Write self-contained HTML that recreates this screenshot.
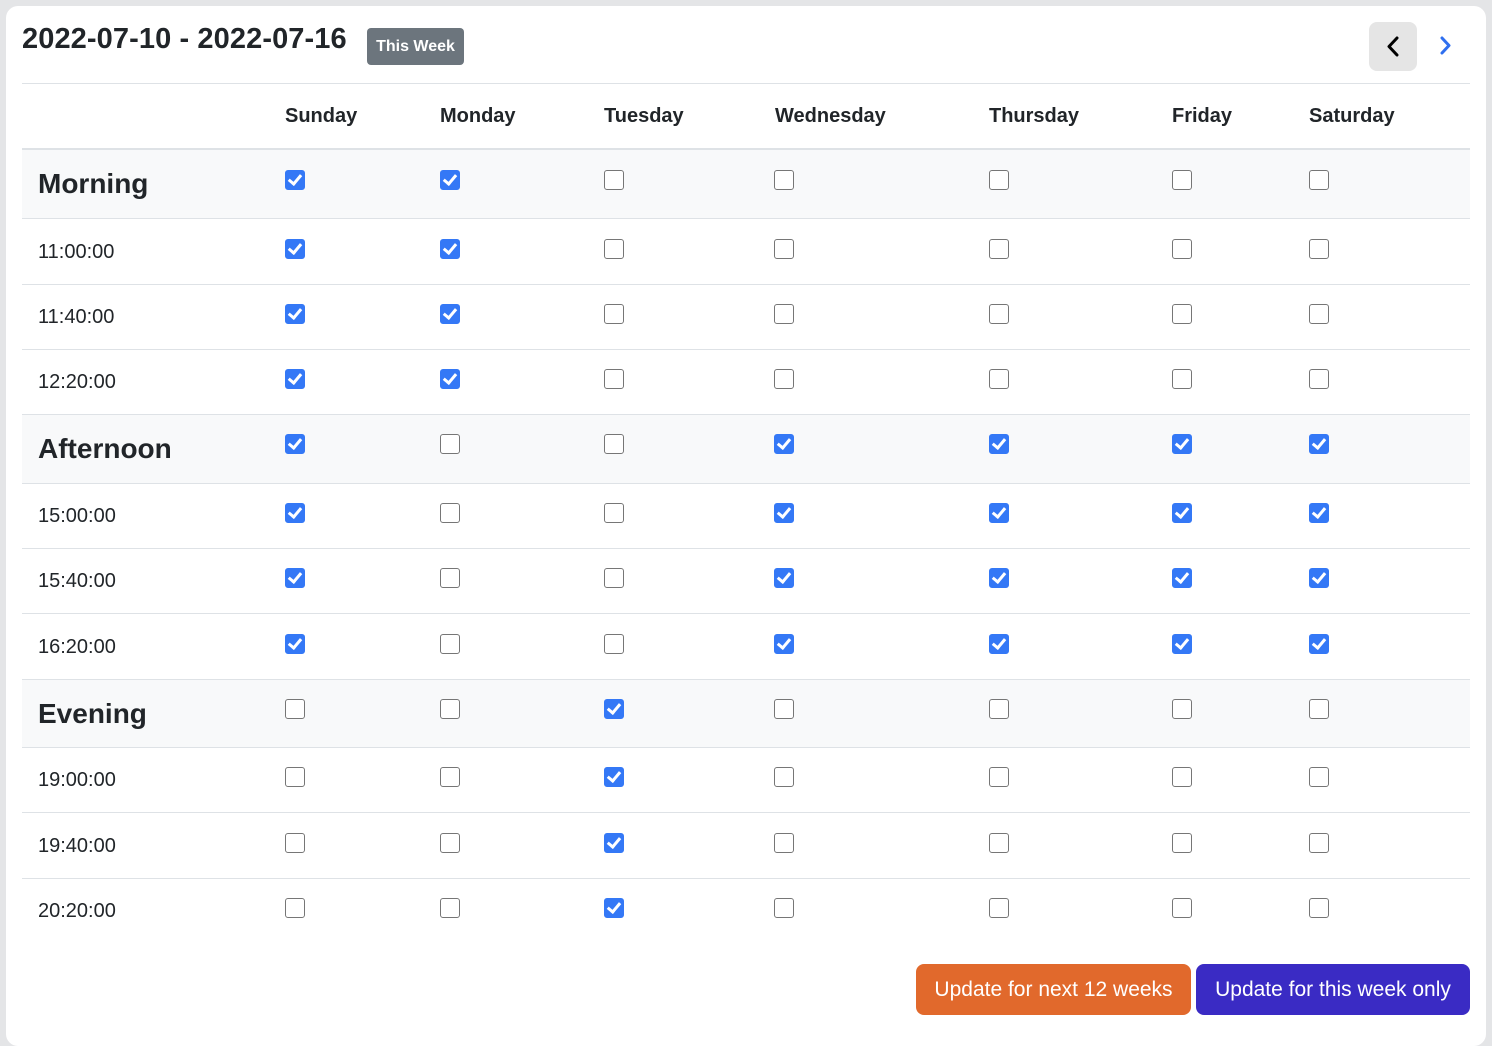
<!DOCTYPE html>
<html><head><meta charset="utf-8"><style>
*{box-sizing:border-box;margin:0;padding:0}
body{width:1492px;height:1028px;background:#e4e5e7;font-family:"Liberation Sans",sans-serif;color:#212529;overflow:hidden;position:relative}
.card{position:absolute;left:6px;top:6px;width:1480px;height:1040px;background:#fff;border-radius:12px}
.abs{position:absolute}
.title{left:22px;top:23px;font-size:29px;font-weight:bold;letter-spacing:0.1px}
.badge{left:367px;top:28px;width:97px;height:37px;background:#6c757d;border-radius:4px;color:#fff;font-weight:bold;font-size:16px;line-height:37px;text-align:center}
.prev{left:1369px;top:22px;width:48px;height:49px;background:#e5e5e5;border-radius:8px}
.hl{left:22px;width:1448px;height:1px;background:#dee2e6}
.th{top:105px;font-size:20px;font-weight:bold}
.row{position:absolute;left:22px;width:1448px;border-bottom:1px solid #dee2e6}
.g{background:#f8f9fa}
.lbl{position:absolute;left:16px;font-size:20px}
.g .lbl{font-size:28px;font-weight:bold}
.cb{position:absolute;width:20px;height:20px;border:1.5px solid #767676;border-radius:3px;background:#fff}
.cb.on{background:#3478f6;border-color:#3478f6}
.cb.on::after{content:"";position:absolute;left:5px;top:1px;width:5px;height:10px;border:solid #fff;border-width:0 3px 3px 0;transform:rotate(40deg)}
.btn{top:964px;height:51px;border-radius:8px;color:#fff;font-size:21px;line-height:51px;text-align:center}
</style></head><body>
<div class="card"></div>
<div class="abs title">2022-07-10 - 2022-07-16</div>
<div class="abs badge">This Week</div>
<div class="abs prev"><svg width="48" height="49"><path d="M28 16 L20 24.5 L28 33" stroke="#000" stroke-width="3" fill="none" stroke-linecap="round" stroke-linejoin="round"/></svg></div>
<svg class="abs" style="left:1436px;top:34px" width="20" height="24"><path d="M6 4 L13 11.5 L6 19" stroke="#2f6fef" stroke-width="3" fill="none" stroke-linecap="round" stroke-linejoin="round"/></svg>
<div class="abs hl" style="top:83px"></div>
<div class="abs th" style="left:285px">Sunday</div>
<div class="abs th" style="left:440px">Monday</div>
<div class="abs th" style="left:604px">Tuesday</div>
<div class="abs th" style="left:775px">Wednesday</div>
<div class="abs th" style="left:989px">Thursday</div>
<div class="abs th" style="left:1172px">Friday</div>
<div class="abs th" style="left:1309px">Saturday</div>
<div class="abs hl" style="top:148px;height:2px"></div>

<div class="row g" style="top:150px;height:69px"><div class="lbl" style="top:18px">Morning</div></div>
<div class="row" style="top:219px;height:66px"><div class="lbl" style="top:22px">11:00:00</div></div>
<div class="row" style="top:285px;height:65px"><div class="lbl" style="top:21px">11:40:00</div></div>
<div class="row" style="top:350px;height:65px"><div class="lbl" style="top:21px">12:20:00</div></div>
<div class="row g" style="top:415px;height:69px"><div class="lbl" style="top:18px">Afternoon</div></div>
<div class="row" style="top:484px;height:65px"><div class="lbl" style="top:21px">15:00:00</div></div>
<div class="row" style="top:549px;height:65px"><div class="lbl" style="top:21px">15:40:00</div></div>
<div class="row" style="top:614px;height:66px"><div class="lbl" style="top:22px">16:20:00</div></div>
<div class="row g" style="top:680px;height:68px"><div class="lbl" style="top:18px">Evening</div></div>
<div class="row" style="top:748px;height:65px"><div class="lbl" style="top:21px">19:00:00</div></div>
<div class="row" style="top:813px;height:66px"><div class="lbl" style="top:22px">19:40:00</div></div>
<div class="row" style="top:879px;height:65px;border:none"><div class="lbl" style="top:21px">20:20:00</div></div>

<div class="cb on" style="left:285px;top:170px"></div><div class="cb on" style="left:440px;top:170px"></div><div class="cb" style="left:604px;top:170px"></div><div class="cb" style="left:774px;top:170px"></div><div class="cb" style="left:989px;top:170px"></div><div class="cb" style="left:1172px;top:170px"></div><div class="cb" style="left:1309px;top:170px"></div>
<div class="cb on" style="left:285px;top:239px"></div><div class="cb on" style="left:440px;top:239px"></div><div class="cb" style="left:604px;top:239px"></div><div class="cb" style="left:774px;top:239px"></div><div class="cb" style="left:989px;top:239px"></div><div class="cb" style="left:1172px;top:239px"></div><div class="cb" style="left:1309px;top:239px"></div>
<div class="cb on" style="left:285px;top:304px"></div><div class="cb on" style="left:440px;top:304px"></div><div class="cb" style="left:604px;top:304px"></div><div class="cb" style="left:774px;top:304px"></div><div class="cb" style="left:989px;top:304px"></div><div class="cb" style="left:1172px;top:304px"></div><div class="cb" style="left:1309px;top:304px"></div>
<div class="cb on" style="left:285px;top:369px"></div><div class="cb on" style="left:440px;top:369px"></div><div class="cb" style="left:604px;top:369px"></div><div class="cb" style="left:774px;top:369px"></div><div class="cb" style="left:989px;top:369px"></div><div class="cb" style="left:1172px;top:369px"></div><div class="cb" style="left:1309px;top:369px"></div>
<div class="cb on" style="left:285px;top:434px"></div><div class="cb" style="left:440px;top:434px"></div><div class="cb" style="left:604px;top:434px"></div><div class="cb on" style="left:774px;top:434px"></div><div class="cb on" style="left:989px;top:434px"></div><div class="cb on" style="left:1172px;top:434px"></div><div class="cb on" style="left:1309px;top:434px"></div>
<div class="cb on" style="left:285px;top:503px"></div><div class="cb" style="left:440px;top:503px"></div><div class="cb" style="left:604px;top:503px"></div><div class="cb on" style="left:774px;top:503px"></div><div class="cb on" style="left:989px;top:503px"></div><div class="cb on" style="left:1172px;top:503px"></div><div class="cb on" style="left:1309px;top:503px"></div>
<div class="cb on" style="left:285px;top:568px"></div><div class="cb" style="left:440px;top:568px"></div><div class="cb" style="left:604px;top:568px"></div><div class="cb on" style="left:774px;top:568px"></div><div class="cb on" style="left:989px;top:568px"></div><div class="cb on" style="left:1172px;top:568px"></div><div class="cb on" style="left:1309px;top:568px"></div>
<div class="cb on" style="left:285px;top:634px"></div><div class="cb" style="left:440px;top:634px"></div><div class="cb" style="left:604px;top:634px"></div><div class="cb on" style="left:774px;top:634px"></div><div class="cb on" style="left:989px;top:634px"></div><div class="cb on" style="left:1172px;top:634px"></div><div class="cb on" style="left:1309px;top:634px"></div>
<div class="cb" style="left:285px;top:699px"></div><div class="cb" style="left:440px;top:699px"></div><div class="cb on" style="left:604px;top:699px"></div><div class="cb" style="left:774px;top:699px"></div><div class="cb" style="left:989px;top:699px"></div><div class="cb" style="left:1172px;top:699px"></div><div class="cb" style="left:1309px;top:699px"></div>
<div class="cb" style="left:285px;top:767px"></div><div class="cb" style="left:440px;top:767px"></div><div class="cb on" style="left:604px;top:767px"></div><div class="cb" style="left:774px;top:767px"></div><div class="cb" style="left:989px;top:767px"></div><div class="cb" style="left:1172px;top:767px"></div><div class="cb" style="left:1309px;top:767px"></div>
<div class="cb" style="left:285px;top:833px"></div><div class="cb" style="left:440px;top:833px"></div><div class="cb on" style="left:604px;top:833px"></div><div class="cb" style="left:774px;top:833px"></div><div class="cb" style="left:989px;top:833px"></div><div class="cb" style="left:1172px;top:833px"></div><div class="cb" style="left:1309px;top:833px"></div>
<div class="cb" style="left:285px;top:898px"></div><div class="cb" style="left:440px;top:898px"></div><div class="cb on" style="left:604px;top:898px"></div><div class="cb" style="left:774px;top:898px"></div><div class="cb" style="left:989px;top:898px"></div><div class="cb" style="left:1172px;top:898px"></div><div class="cb" style="left:1309px;top:898px"></div>

<div class="abs btn" style="left:916px;width:275px;background:#e1692c">Update for next 12 weeks</div>
<div class="abs btn" style="left:1196px;width:274px;background:#3a2bc4">Update for this week only</div>
</body></html>
